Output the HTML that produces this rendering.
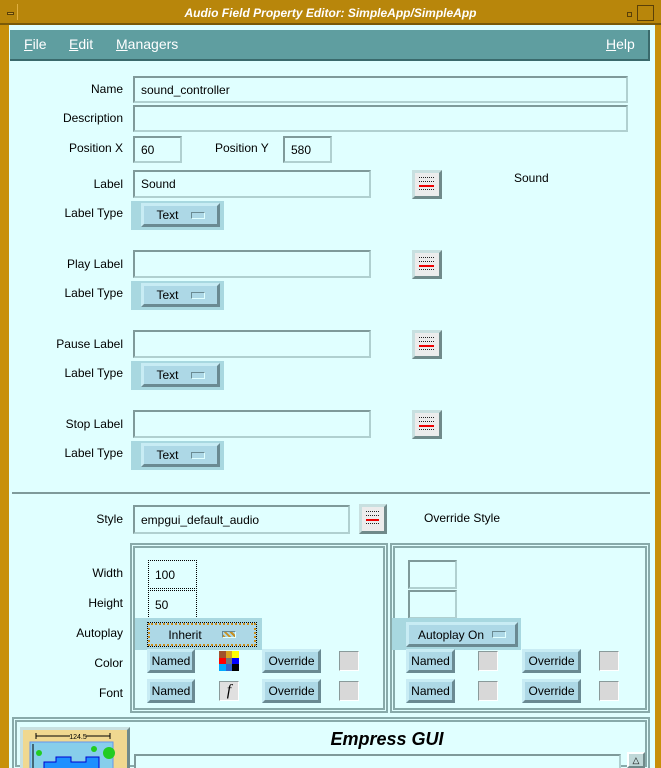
<!DOCTYPE html>
<html style="overflow:hidden;width:661px;height:768px"><head><meta charset="utf-8"><style>
*{margin:0;padding:0;box-sizing:border-box}
body{width:661px;height:768px;overflow:hidden;background:#e0ffff;font-family:"Liberation Sans",sans-serif;font-size:12px;color:#000;position:relative}
.a{position:absolute}
.lbl{position:absolute;text-align:right;width:123px;left:0;font-size:12px}
.in{position:absolute;background:#e0ffff;border:2px solid;border-color:#7f9a9a #b0d0d0 #b0d0d0 #7f9a9a;padding:0 0 0 6px;display:flex;align-items:center;font-size:12px}
.dot{border:1px dotted #000;box-shadow:inset 0 0 0 1px #e0ffff}
.btn{position:absolute;background:#add8e6;border:3px solid;border-color:#c8ecf4 #6a8a92 #6a8a92 #c8ecf4;display:flex;align-items:center;justify-content:center;font-size:12px}
.opt{position:absolute;background:#a8d8e0}
.ind{display:inline-block;width:14px;height:7px;background:#add8e6;border:1px solid;border-color:#6a8a92 #e0ffff #e0ffff #6a8a92;margin-left:12px}
.box{position:absolute;background:#d8d8d8;border:1px solid;border-color:#8a9a9a #fff #fff #8a9a9a}
.ico{position:absolute;background:#ececec;border:3px solid;border-color:#c8e0e0 #708a8a #708a8a #c8e0e0}
.ico i{position:absolute;left:4px;right:5px;height:2px;border-top:1px dotted #222}
.ico i.r{border-top:2px solid #e00}
.pan{position:absolute;border:2px solid #8aa;box-shadow:inset 0 0 0 1px #e0ffff,inset 0 0 0 3px #8aa}
</style></head><body>
<div class="a" style="left:0;top:0;width:661px;height:768px;border-left:9px solid #c8900a;border-right:6px solid #c8900a"></div>
<div class="a" style="left:0;top:0;width:661px;height:25px;background:#b8860b;border-bottom:2px solid #7a5a08"></div>
<div class="a" style="left:4px;top:4px;width:14px;height:16px;border-right:1px solid #e0b040"></div>
<div class="a" style="left:7px;top:12px;width:7px;height:3px;border:1px solid #5a4008;background:#d0a030"></div>
<div class="a" style="left:0;top:6px;width:661px;text-align:center;color:#fff;font-style:italic;font-weight:bold;font-size:12px">Audio Field Property Editor: SimpleApp/SimpleApp</div>
<div class="a" style="left:627px;top:12px;width:5px;height:5px;border:1px solid #5a4008"></div>
<div class="a" style="left:637px;top:5px;width:17px;height:16px;border:1px solid #5a4008"></div>
<div class="a" style="left:9px;top:27px;width:646px;height:741px;background:#e0ffff"></div>
<div class="a" style="left:10px;top:30px;width:640px;height:31px;background:#5f9ea0;border-bottom:2px solid #3a6a6c;border-right:2px solid #3a6a6c;color:#fff;font-size:14px">
<span class="a" style="left:14px;top:6px"><u>F</u>ile</span><span class="a" style="left:59px;top:6px"><u>E</u>dit</span><span class="a" style="left:106px;top:6px"><u>M</u>anagers</span><span class="a" style="left:596px;top:6px"><u>H</u>elp</span></div>

<div class="lbl" style="top:82px">Name</div><div class="in" style="left:133px;top:76px;width:495px;height:27px">sound_controller</div>
<div class="lbl" style="top:111px">Description</div><div class="in" style="left:133px;top:105px;width:495px;height:27px"></div>
<div class="lbl" style="top:141px">Position X</div><div class="in" style="left:133px;top:136px;width:49px;height:27px">60</div>
<div class="a" style="left:215px;top:141px">Position Y</div><div class="in" style="left:283px;top:136px;width:49px;height:27px">580</div>

<div class="lbl" style="top:177px">Label</div><div class="in" style="left:133px;top:170px;width:238px;height:28px">Sound</div>
<div class="a" style="left:514px;top:171px">Sound</div>
<div class="lbl" style="top:257px">Play Label</div><div class="in" style="left:133px;top:250px;width:238px;height:28px"></div>
<div class="lbl" style="top:337px">Pause Label</div><div class="in" style="left:133px;top:330px;width:238px;height:28px"></div>
<div class="lbl" style="top:417px">Stop Label</div><div class="in" style="left:133px;top:410px;width:238px;height:28px"></div>

<div class="ico" style="left:412px;top:170px;width:30px;height:29px"><i style="top:4px"></i><i style="top:8px"></i><i class="r" style="top:12px"></i><i style="top:16px"></i></div>
<div class="ico" style="left:412px;top:250px;width:30px;height:29px"><i style="top:4px"></i><i style="top:8px"></i><i class="r" style="top:12px"></i><i style="top:16px"></i></div>
<div class="ico" style="left:412px;top:330px;width:30px;height:29px"><i style="top:4px"></i><i style="top:8px"></i><i class="r" style="top:12px"></i><i style="top:16px"></i></div>
<div class="ico" style="left:412px;top:410px;width:30px;height:29px"><i style="top:4px"></i><i style="top:8px"></i><i class="r" style="top:12px"></i><i style="top:16px"></i></div>

<div class="lbl" style="top:206px">Label Type</div><div class="opt" style="left:131px;top:201px;width:93px;height:29px"></div><div class="btn" style="left:141px;top:203px;width:79px;height:24px">Text<span class="ind"></span></div>
<div class="lbl" style="top:286px">Label Type</div><div class="opt" style="left:131px;top:281px;width:93px;height:29px"></div><div class="btn" style="left:141px;top:283px;width:79px;height:24px">Text<span class="ind"></span></div>
<div class="lbl" style="top:366px">Label Type</div><div class="opt" style="left:131px;top:361px;width:93px;height:29px"></div><div class="btn" style="left:141px;top:363px;width:79px;height:24px">Text<span class="ind"></span></div>
<div class="lbl" style="top:446px">Label Type</div><div class="opt" style="left:131px;top:441px;width:93px;height:29px"></div><div class="btn" style="left:141px;top:443px;width:79px;height:24px">Text<span class="ind"></span></div>

<div class="a" style="left:12px;top:492px;width:638px;height:2px;background:#7f9a9a"></div>

<div class="lbl" style="top:512px">Style</div><div class="in" style="left:133px;top:505px;width:217px;height:29px">empgui_default_audio</div>
<div class="ico" style="left:359px;top:504px;width:28px;height:30px"><i style="top:4px"></i><i style="top:8px"></i><i class="r" style="top:12px"></i><i style="top:16px"></i></div>
<div class="a" style="left:424px;top:511px">Override Style</div>

<div class="pan" style="left:130px;top:543px;width:258px;height:170px"></div>
<div class="pan" style="left:390px;top:543px;width:260px;height:170px"></div>

<div class="lbl" style="top:566px">Width</div><div class="in dot" style="left:148px;top:560px;width:49px;height:29px">100</div>
<div class="lbl" style="top:596px">Height</div><div class="in dot" style="left:148px;top:590px;width:49px;height:29px">50</div>
<div class="lbl" style="top:626px">Autoplay</div>
<div class="opt" style="left:135px;top:618px;width:127px;height:32px"></div>
<div class="btn" style="left:147px;top:622px;width:110px;height:25px;border:1px dotted #000;outline:2px dotted #c89020;outline-offset:-3px">Inherit<span class="ind" style="margin-left:20px;background:repeating-linear-gradient(45deg,#c89020 0 2px,#add8e6 2px 4px)"></span></div>
<div class="lbl" style="top:656px">Color</div>
<div class="btn" style="left:147px;top:649px;width:48px;height:24px">Named</div>
<div class="a" style="left:219px;top:651px;width:20px;height:20px;display:grid;grid-template-columns:1fr 1fr 1fr"><b style="background:#a0522d"></b><b style="background:#daa520"></b><b style="background:#ff0"></b><b style="background:#f00"></b><b style="background:#777"></b><b style="background:#00f"></b><b style="background:#0af"></b><b style="background:#36c"></b><b style="background:#000"></b></div>
<div class="btn" style="left:262px;top:649px;width:59px;height:24px">Override</div>
<div class="box" style="left:339px;top:651px;width:20px;height:20px"></div>
<div class="lbl" style="top:686px">Font</div>
<div class="btn" style="left:147px;top:679px;width:48px;height:24px">Named</div>
<div class="box" style="left:219px;top:681px;width:20px;height:20px;background:#e0e0e0;font-family:'Liberation Serif',serif;font-style:italic;font-size:16px;text-align:center;line-height:18px">f</div>
<div class="btn" style="left:262px;top:679px;width:59px;height:24px">Override</div>
<div class="box" style="left:339px;top:681px;width:20px;height:20px"></div>

<div class="in" style="left:408px;top:560px;width:49px;height:29px"></div>
<div class="in" style="left:408px;top:590px;width:49px;height:29px"></div>
<div class="opt" style="left:392px;top:618px;width:129px;height:32px"></div>
<div class="btn" style="left:406px;top:622px;width:112px;height:25px">Autoplay On<span class="ind" style="margin-left:8px"></span></div>
<div class="btn" style="left:406px;top:649px;width:49px;height:24px">Named</div>
<div class="box" style="left:478px;top:651px;width:20px;height:20px"></div>
<div class="btn" style="left:522px;top:649px;width:59px;height:24px">Override</div>
<div class="box" style="left:599px;top:651px;width:20px;height:20px"></div>
<div class="btn" style="left:406px;top:679px;width:49px;height:24px">Named</div>
<div class="box" style="left:478px;top:681px;width:20px;height:20px"></div>
<div class="btn" style="left:522px;top:679px;width:59px;height:24px">Override</div>
<div class="box" style="left:599px;top:681px;width:20px;height:20px"></div>

<div class="pan" style="left:12px;top:717px;width:638px;height:51px;border-bottom:none"></div>
<div class="a" style="left:20px;top:727px;width:110px;height:41px;border:3px solid;border-bottom:none;border-color:#c8e0e0 #708a8a #708a8a #c8e0e0;background:#f0d890;overflow:hidden">
<svg width="104" height="44" style="position:absolute;left:0;top:0">
<rect x="7" y="12" width="83" height="40" fill="#87ceeb" stroke="#6495ed"/>
<line x1="13" y1="6" x2="87" y2="6" stroke="#000"/><line x1="13" y1="3" x2="13" y2="9" stroke="#000"/><line x1="87" y1="3" x2="87" y2="9" stroke="#000"/>
<rect x="47" y="1" width="16" height="9" fill="#f0d890"/>
<text x="55" y="9" font-size="7" text-anchor="middle" font-family="Liberation Sans">124.5</text>
<line x1="10" y1="14" x2="10" y2="44" stroke="#000"/>
<circle cx="16" cy="23" r="3" fill="#2c2"/><circle cx="71" cy="19" r="3" fill="#2c2"/><circle cx="86" cy="23" r="6" fill="#2c2"/>
<path d="M21 32h12v-5h15v5h15v-5h13v20H21z" fill="#1e90ff" stroke="#00c"/>
</svg></div>
<div class="a" style="left:134px;top:729px;width:506px;text-align:center;font-weight:bold;font-style:italic;font-size:18px">Empress GUI</div>
<div class="in" style="left:134px;top:754px;width:487px;height:14px;border-bottom:none"></div>
<div class="a" style="left:627px;top:752px;width:18px;height:16px;background:#c0d8d8;border:2px solid;border-color:#fff #708a8a #708a8a #fff;font-size:9px;text-align:center;line-height:12px">△</div>
</body></html>
